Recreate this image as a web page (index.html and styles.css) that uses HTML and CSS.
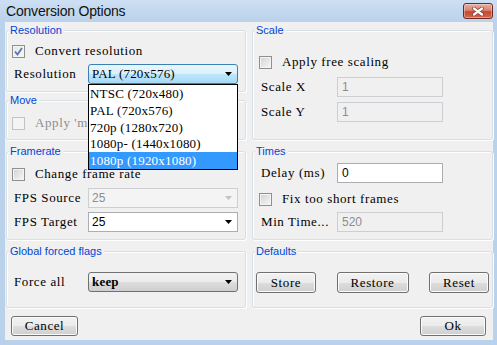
FILE: index.html
```html
<!DOCTYPE html>
<html lang="en">
<head>
    <meta charset="UTF-8">
    <title>Conversion Options</title>
    <link rel="stylesheet" href="styles.css">
</head>
<body>
    <div class="window">
        <div class="titlebar">
            <span class="title">Conversion Options</span>
            <span class="close">
                <svg width="12" height="9" viewBox="0 0 12 9">
                    <path d="M2 1.5 L10 7.5 M10 1.5 L2 7.5" stroke="#7d3b2f" stroke-width="3.6" stroke-linecap="round"/>
                    <path d="M2 1.5 L10 7.5 M10 1.5 L2 7.5" stroke="#fff" stroke-width="2.2" stroke-linecap="round"/>
                </svg>
            </span>
        </div>
        <div class="client">
            <div class="panes">
                <div class="col">
                    <div class="group res">
                        <span class="legend">Resolution</span>
                        <div class="row chk">
                            <span class="check on"><svg width="11" height="11" viewBox="0 0 11 11"><path d="M2 5.5 L4.5 8.5 L9 2" fill="none" stroke="#5a76b0" stroke-width="1.8"/></svg></span>
                            <span class="cap">Convert resolution</span>
                        </div>
                        <div class="row gap4">
                            <span class="lbl">Resolution</span>
                            <div class="combo hot">
                                <span>PAL (720x576)</span>
                                <svg class="arrow" width="7" height="4" viewBox="0 0 7 4"><path d="M0 0 H7 L3.5 4 Z" fill="#000"/></svg>
                                <ul class="drop">
                                    <li>NTSC (720x480)</li>
                                    <li>PAL (720x576)</li>
                                    <li>720p (1280x720)</li>
                                    <li>1080p- (1440x1080)</li>
                                    <li class="sel">1080p (1920x1080)</li>
                                </ul>
                            </div>
                        </div>
                    </div>
                    <div class="group move">
                        <span class="legend">Move</span>
                        <div class="row chk">
                            <span class="check off"></span>
                            <span class="cap dim">Apply 'mo</span>
                        </div>
                    </div>
                </div>

                <div class="group scale">
                    <span class="legend">Scale</span>
                    <div class="row chk">
                        <span class="check"></span>
                        <span class="cap">Apply free scaling</span>
                    </div>
                    <div class="row gap6">
                        <span class="lbl wide">Scale X</span>
                        <span class="field off">1</span>
                    </div>
                    <div class="row gap5">
                        <span class="lbl wide">Scale Y</span>
                        <span class="field off">1</span>
                    </div>
                </div>

                <div class="group frame">
                    <span class="legend">Framerate</span>
                    <div class="row chk">
                        <span class="check"></span>
                        <span class="cap">Change frame rate</span>
                    </div>
                    <div class="row gap5">
                        <span class="lbl">FPS Source</span>
                        <div class="combo edit off">
                            <span>25</span>
                            <svg class="arrow" width="7" height="4" viewBox="0 0 7 4"><path d="M0 0 H7 L3.5 4 Z" fill="#c2c2c2"/></svg>
                        </div>
                    </div>
                    <div class="row gap4">
                        <span class="lbl">FPS Target</span>
                        <div class="combo edit">
                            <span>25</span>
                            <svg class="arrow" width="7" height="4" viewBox="0 0 7 4"><path d="M0 0 H7 L3.5 4 Z" fill="#000"/></svg>
                        </div>
                    </div>
                </div>

                <div class="group times">
                    <span class="legend">Times</span>
                    <div class="row">
                        <span class="lbl wide">Delay (ms)</span>
                        <span class="field">0</span>
                    </div>
                    <div class="row chk gap7">
                        <span class="check"></span>
                        <span class="cap">Fix too short frames</span>
                    </div>
                    <div class="row gap4">
                        <span class="lbl wide">Min Time...</span>
                        <span class="field off">520</span>
                    </div>
                </div>

                <div class="group flags">
                    <span class="legend">Global forced flags</span>
                    <div class="row">
                        <span class="lbl">Force all</span>
                        <div class="combo">
                            <span class="bold">keep</span>
                            <svg class="arrow" width="7" height="4" viewBox="0 0 7 4"><path d="M0 0 H7 L3.5 4 Z" fill="#000"/></svg>
                        </div>
                    </div>
                </div>

                <div class="group defaults">
                    <span class="legend">Defaults</span>
                    <div class="btnrow">
                        <span class="btn w60">Store</span>
                        <span class="btn w72">Restore</span>
                        <span class="btn w60">Reset</span>
                    </div>
                </div>
            </div>
            <div class="footer">
                <span class="btn low w67">Cancel</span>
                <span class="btn low w66">Ok</span>
            </div>
        </div>
    </div>
</body>
</html>
```

FILE: styles.css
```css
* { margin: 0; padding: 0; box-sizing: border-box; }
li { list-style: none; }

body {
    width: 497px;
    height: 345px;
    overflow: hidden;
    font-family: "Liberation Serif", serif;
    font-size: 13px;
    letter-spacing: .6px;
    color: #000;
}

.window {
    width: 497px;
    height: 345px;
    display: flex;
    flex-direction: column;
    padding: 0 4px 5px 5px;
    background: linear-gradient(#cddff3, #bad2eb 22px, #b9d1ea);
}

.titlebar {
    height: 22px;
    display: flex;
    align-items: center;
    justify-content: space-between;
}
.title {
    font-family: "Liberation Sans", sans-serif;
    font-size: 14px;
    letter-spacing: -.2px;
    color: #121212;
    padding-left: 1px;
}
.close {
    width: 30px;
    height: 16px;
    display: flex;
    align-items: center;
    justify-content: center;
    border: 1px solid #6e2a20;
    border-radius: 3px;
    background: linear-gradient(#eab0a2, #d98270 45%, #c6472f 55%, #cf6a4f);
    box-shadow: inset 0 0 0 1px rgba(255, 255, 255, .35);
}

.client {
    flex: 1;
    background: #f0f0f0;
    padding: 8px 0 0 1px;
}

.panes {
    display: grid;
    grid-template-columns: 240px 241px;
    grid-template-rows: 110px 89px 57px;
    column-gap: 6px;
    row-gap: 11px;
}
.col {
    display: flex;
    flex-direction: column;
    gap: 8px;
}

.group {
    position: relative;
    border: 1px solid #d5dfe5;
    border-radius: 3px;
    box-shadow: inset 1px 1px 0 #fff, 1px 1px 0 #fff;
    padding-left: 5px;
}
.legend {
    position: absolute;
    top: -7px;
    left: 2px;
    padding: 0 2px 0 1px;
    background: #f0f0f0;
    font-family: "Liberation Sans", sans-serif;
    font-size: 11px;
    line-height: 13px;
    letter-spacing: 0;
    color: #0046d5;
}

.res { height: 62px; padding-top: 11px; }
.move { height: 40px; padding-top: 13px; }
.scale { padding: 22px 0 0 6px; }
.frame { padding-top: 13px; }
.times { padding: 11px 0 0 6px; }
.flags { padding-top: 20px; }
.defaults { padding: 20px 3px 0; }

.row {
    display: flex;
    align-items: center;
    height: 20px;
    white-space: nowrap;
}
.row.chk { height: 18px; }
.gap4 { margin-top: 4px; }
.gap5 { margin-top: 5px; }
.gap6 { margin-top: 6px; }
.gap7 { margin-top: 7px; }

.lbl {
    width: 74px;
    margin-left: 2px;
}
.lbl.wide { width: 76px; }
.cap { margin-left: 10px; }
.dim { color: #8d8d8d; }
.bold { font-weight: bold; }

.check {
    width: 13px;
    height: 13px;
    display: flex;
    align-items: center;
    justify-content: center;
    border: 1px solid #8e8f8f;
    background: linear-gradient(135deg, #cfd2d6, #f7f7f7);
    box-shadow: inset 0 0 0 1px #f4f4f4;
}
.check.on { background: linear-gradient(135deg, #e2e4e7, #fafafa); }
.check.off {
    border-color: #c3c3c3;
    background: #f4f4f4;
}

.combo {
    position: relative;
    width: 150px;
    height: 20px;
    display: flex;
    align-items: center;
    padding-left: 3px;
    border: 1px solid #707070;
    border-radius: 3px;
    letter-spacing: .2px;
    background: linear-gradient(#f2f2f2, #ebebeb 50%, #dddddd 50%, #cfcfcf);
}
.combo .arrow {
    margin-left: auto;
    margin-right: 5px;
}
.combo.hot {
    border-color: #3c7fb1;
    background: linear-gradient(#eaf6fd, #d9f0fc 50%, #bee6fd 50%, #a7d9f5);
}
.combo.edit {
    border-color: #abadb3;
    border-radius: 0;
    background: #fff;
    font-family: "Liberation Sans", sans-serif;
    font-size: 12px;
    letter-spacing: 0;
}
.combo.off {
    border-color: #ccced1;
    background: #f4f4f4;
    color: #8d8d8d;
}

.drop {
    position: absolute;
    top: 19px;
    left: -1px;
    width: 150px;
    border: 1px solid #000;
    background: #fff;
    z-index: 2;
}
.drop li {
    height: 16.8px;
    line-height: 17px;
    padding-left: 1px;
}
.drop li.sel {
    background: #3399ff;
    color: #fff;
}

.field {
    width: 106px;
    height: 20px;
    display: flex;
    align-items: center;
    padding-left: 4px;
    border: 1px solid #abadb3;
    background: #fff;
    font-family: "Liberation Sans", sans-serif;
    font-size: 12px;
    letter-spacing: 0;
}
.field.off {
    border-color: #ccced1;
    background: #f0f0f0;
    color: #8d8d8d;
}

.btnrow {
    display: flex;
    justify-content: space-between;
}
.btn {
    height: 21px;
    display: flex;
    align-items: center;
    justify-content: center;
    border: 1px solid #707070;
    border-radius: 3px;
    background: linear-gradient(#f2f2f2, #ebebeb 50%, #dddddd 50%, #cfcfcf);
    box-shadow: inset 0 0 0 1px #fbfbfb;
}
.btn.low { height: 20px; }
.w60 { width: 60px; }
.w66 { width: 66px; }
.w67 { width: 67px; }
.w72 { width: 72px; }

.footer {
    display: flex;
    justify-content: space-between;
    padding: 8px 7px 0 5px;
}
```
